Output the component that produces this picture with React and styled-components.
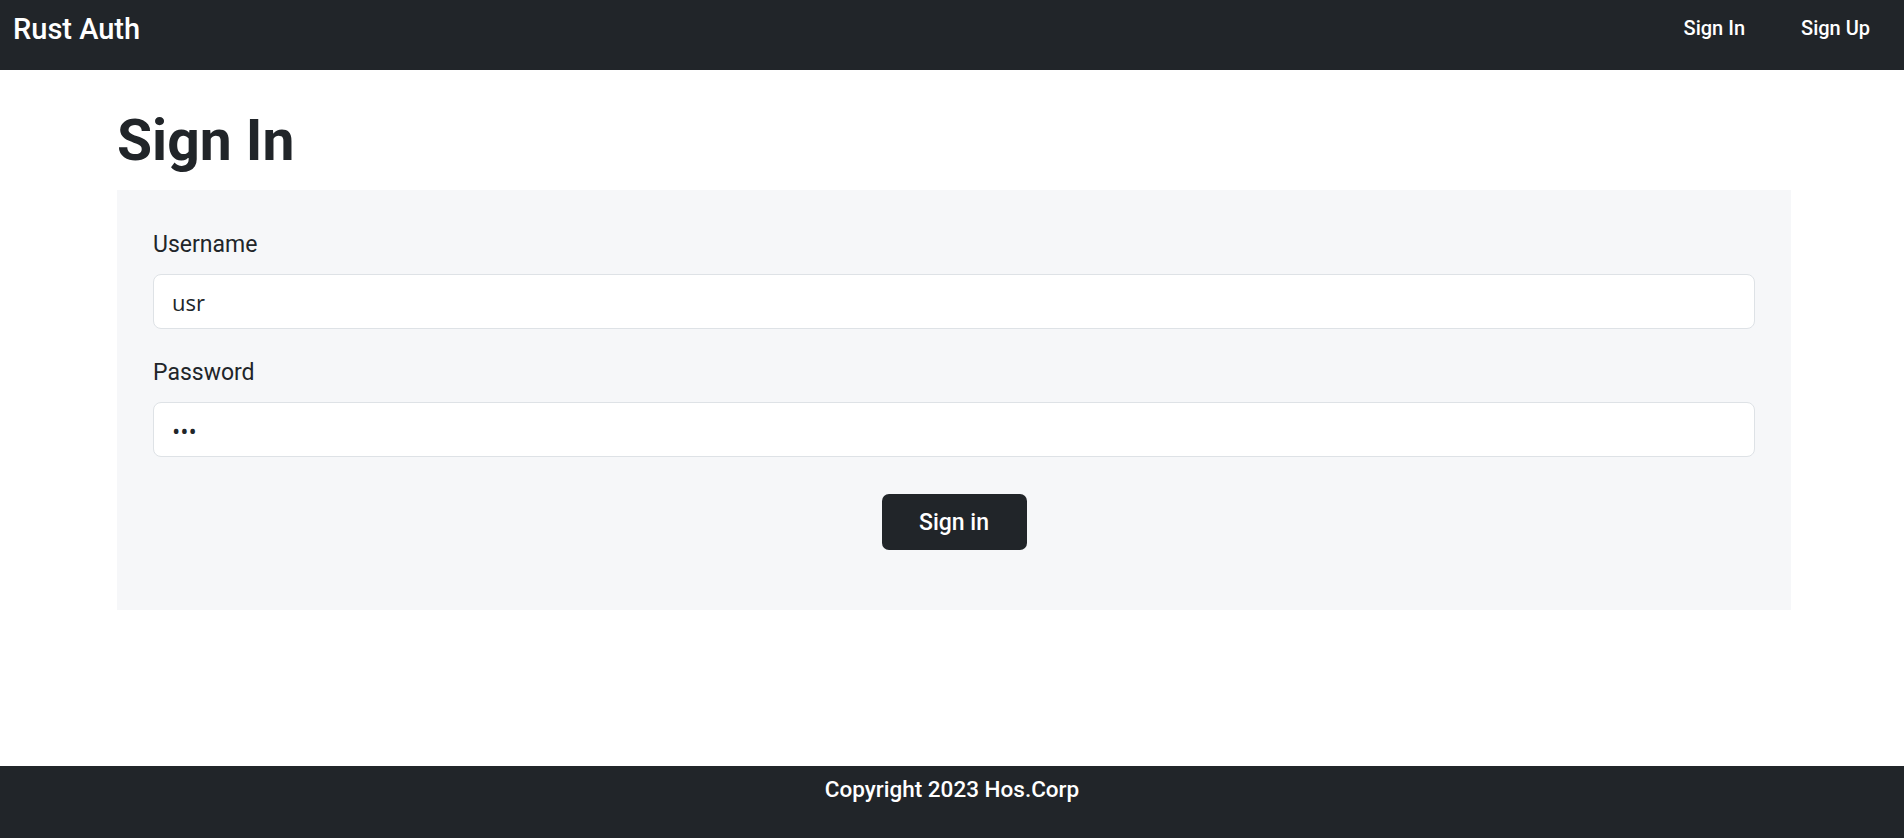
import React from "react";
import styled, { createGlobalStyle } from "styled-components";

const Global = createGlobalStyle`
  html, body { margin: 0; padding: 0; background: #fff; }
  body { font-family: Roboto, "Liberation Sans", sans-serif; color: #212529; }
  * { box-sizing: border-box; }
`;

const Page = styled.div`
  display: flex;
  flex-direction: column;
  min-height: 838px;
`;

const Nav = styled.nav`
  height: 70px;
  background: #212529;
  display: flex;
  align-items: center;
  justify-content: space-between;
  padding: 0 34px 12px 13px;
`;

const Brand = styled.a`
  color: #fff;
  font-size: 29px;
  font-weight: 500;
  text-decoration: none;
`;

const NavLinks = styled.div`
  display: flex;
  gap: 56px;
  margin-top: -2px;
`;

const NavLink = styled.a`
  color: #fff;
  font-size: 20px;
  font-weight: 500;
  text-decoration: none;
`;

const Main = styled.main`
  flex: 1;
  padding: 0 113px 0 117px;
`;

const Title = styled.h1`
  margin: 0;
  height: 120px;
  padding-top: 42px;
  font-size: 57px;
  font-weight: 700;
  line-height: 1;
`;

const Card = styled.form`
  background: #f6f7f9;
  padding: 40px 36px 60px;
  display: flex;
  flex-direction: column;
`;

const Label = styled.label`
  font-size: 23px;
  font-weight: 400;
  line-height: 30px;
  margin-bottom: 14px;
`;

const Input = styled.input`
  height: 55px;
  border: 1px solid #dee2e6;
  border-radius: 8px;
  background: #fff;
  padding: 0 18px;
  font-family: "Open Sans", sans-serif;
  font-size: 22px;
  color: #212529;
  outline: none;
  margin-bottom: ${(p) => p.$mb || 0}px;
`;

const Actions = styled.div`
  display: flex;
  justify-content: center;
  margin-top: 37px;
`;

const Button = styled.button`
  width: 145px;
  height: 56px;
  border: none;
  border-radius: 7px;
  background: #212529;
  color: #fff;
  font-family: Roboto, sans-serif;
  font-size: 23px;
  font-weight: 500;
`;

const Footer = styled.footer`
  height: 72px;
  background: #212529;
  color: #fff;
  display: flex;
  justify-content: center;
  padding-top: 10px;
  font-size: 22.5px;
  font-weight: 500;
`;

export default function App() {
  return (
    <Page>
      <Global />
      <Nav>
        <Brand href="#">Rust Auth</Brand>
        <NavLinks>
          <NavLink href="#">Sign In</NavLink>
          <NavLink href="#">Sign Up</NavLink>
        </NavLinks>
      </Nav>
      <Main>
        <Title>Sign In</Title>
        <Card onSubmit={(e) => e.preventDefault()}>
          <Label htmlFor="u">Username</Label>
          <Input id="u" defaultValue="usr" $mb={29} />
          <Label htmlFor="p">Password</Label>
          <Input id="p" type="password" defaultValue="usr" />
          <Actions>
            <Button type="submit">Sign in</Button>
          </Actions>
        </Card>
      </Main>
      <Footer>Copyright 2023 Hos.Corp</Footer>
    </Page>
  );
}
